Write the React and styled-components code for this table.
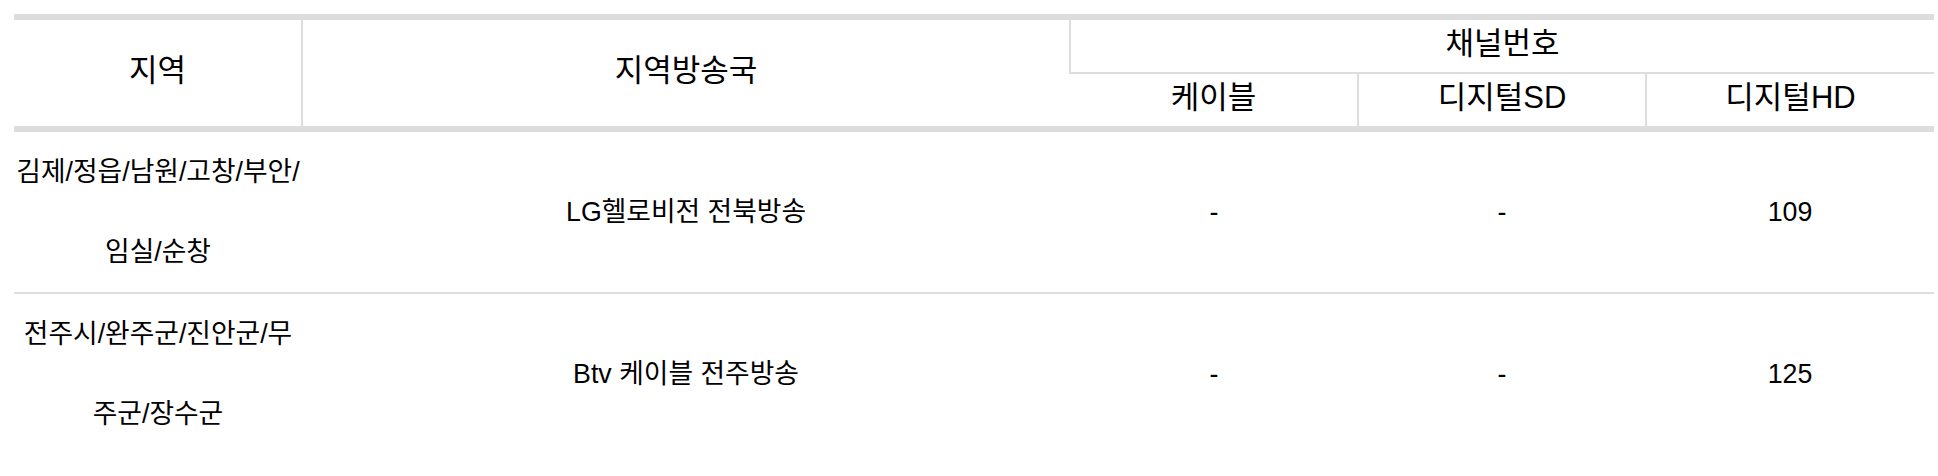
import React from "react";
import styled, { createGlobalStyle } from "styled-components";

const rows = [
  {
    region: "김제/정읍/남원/고창/부안/임실/순창",
    station: "LG헬로비전 전북방송",
    cable: "-",
    sd: "-",
    hd: "109",
  },
  {
    region: "전주시/완주군/진안군/무주군/장수군",
    station: "Btv 케이블 전주방송",
    cable: "-",
    sd: "-",
    hd: "125",
  },
];

const ChannelTable = () => {
  return (
    <Page>
      <GlobalStyle />
      <Table>
        <colgroup>
          <Col $w={15} />
          <Col $w={40} />
          <Col $w={15} />
          <Col $w={15} />
          <Col $w={15} />
        </colgroup>
        <Head>
          <tr>
            <Th rowSpan={2}>지역</Th>
            <Th rowSpan={2}>지역방송국</Th>
            <Th colSpan={3} $split>
              채널번호
            </Th>
          </tr>
          <tr>
            <Th>케이블</Th>
            <Th>디지털SD</Th>
            <Th>디지털HD</Th>
          </tr>
        </Head>
        <tbody>
          {rows.map((row, i) => (
            <Row key={i}>
              <Td>{row.region}</Td>
              <Td>{row.station}</Td>
              <Td>{row.cable}</Td>
              <Td>{row.sd}</Td>
              <Td>{row.hd}</Td>
            </Row>
          ))}
        </tbody>
      </Table>
    </Page>
  );
};

export default ChannelTable;

const GlobalStyle = createGlobalStyle`
  body {
    margin: 0;
    background: #fff;
    font-family: "Liberation Sans", "Noto Sans CJK KR", sans-serif;
    color: #000;
  }
`;

const Page = styled.div`
  padding: 14px 4px 0 14px;
`;

const Table = styled.table`
  width: 1920px;
  border-collapse: collapse;
  table-layout: fixed;
  border-top: 6px solid #ddd;
`;

const Col = styled.col`
  width: ${(p) => p.$w}%;
`;

const Head = styled.thead`
  border-bottom: 6px solid #ddd;
`;

const Th = styled.th`
  height: 47px;
  padding: 0 0 5px;
  font-size: 31px;
  font-weight: normal;
  line-height: 1.2;
  text-align: center;
  vertical-align: middle;
  border-left: 2px solid #ddd;
  border-bottom: ${(p) => (p.$split ? "2px solid #ddd" : "none")};

  &:first-child {
    border-left: none;
  }
`;

const Row = styled.tr`
  border-bottom: 2px solid #ddd;

  &:last-child {
    border-bottom: none;
  }
`;

const Td = styled.td`
  padding: 0;
  font-size: 26.75px;
  line-height: 80px;
  text-align: center;
  vertical-align: middle;
`;
